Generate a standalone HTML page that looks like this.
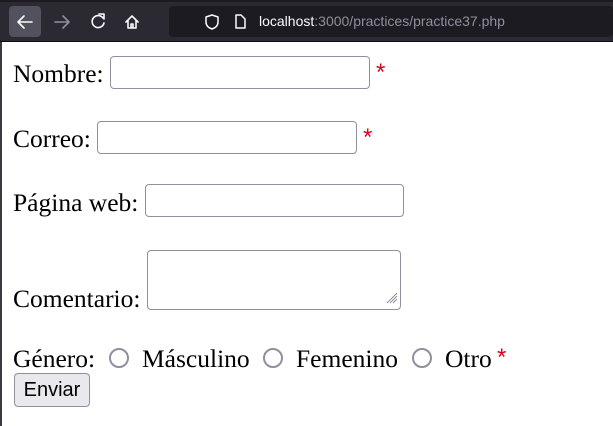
<!DOCTYPE html>
<html><head><meta charset="utf-8"><style>
*{margin:0;padding:0;box-sizing:border-box}
body{width:613px;height:426px;overflow:hidden;background:#fff;position:relative;font-family:"Liberation Serif",serif;font-size:25.5px;color:#000}
.a{position:absolute;white-space:nowrap}
.t{line-height:1}
.in{position:absolute;border:1px solid #8f8f9d;border-radius:4px;background:#fff}
.st{position:absolute;color:#e0001a;font-size:24px;font-family:"Liberation Sans",sans-serif;line-height:1}
.r{position:absolute;width:20px;height:20px;border:2.5px solid #8f8f9d;border-radius:50%}
</style></head><body>
<div class="a" style="left:0;top:0;width:613px;height:42px;background:#2b2a33"></div>
<div class="a" style="left:0;top:0;width:613px;height:2px;background:#1c1b22"></div>
<div class="a" style="left:0;top:41px;width:613px;height:1px;background:#0c0c0d"></div>
<div class="a" style="left:0;top:42px;width:2px;height:384px;background:#3a3a40"></div>
<div class="a" style="left:9px;top:6px;width:32px;height:31px;background:#52525e;border-radius:4px"></div>
<svg class="a" style="left:0;top:0" width="200" height="42">
<g fill="none" stroke="#fbfbfe" stroke-width="1.6" stroke-linecap="round" stroke-linejoin="round">
<path d="M18 22h14M24 16l-6 6 6 6"/>
<path d="M55 22h14M63 16l6 6-6 6" stroke="#8f8f9d"/>
<path d="M103 18a6 6 0 1 0 1 5"/><path d="M99 14h5v5" />
<path d="M126 22l6-6 6 6M128 20v8h8v-8M131 28v-4h2v4"/>
</g></svg>
<div class="a" style="left:169px;top:6px;width:444px;height:31px;background:#1c1b22;border-radius:4px"></div>
<svg class="a" style="left:169px;top:6px" width="80" height="31">
<g fill="none" stroke="#fbfbfe" stroke-width="1.5" stroke-linejoin="round">
<path d="M43 9l6 2v5c0 4-3 6-6 7-3-1-6-3-6-7v-5z"/>
<path d="M67 9h5l4 4v9h-9z"/>
</g></svg>
<div class="a" style="left:259px;top:13px;font-family:'Liberation Sans',sans-serif;font-size:14px;color:#fbfbfe;line-height:17px">localhost<span style="color:#8f8f9d">:3000/practices/practice37.php</span></div>

<div class="a t" style="left:13px;top:61px">Nombre:</div>
<div class="in" style="left:110px;top:56px;width:260px;height:33px"></div>
<div class="st" style="left:376px;top:61px">*</div>

<div class="a t" style="left:13px;top:126px">Correo:</div>
<div class="in" style="left:97px;top:121px;width:260px;height:33px"></div>
<div class="st" style="left:363px;top:126px">*</div>

<div class="a t" style="left:13px;top:190px">Página web:</div>
<div class="in" style="left:145px;top:184px;width:259px;height:33px"></div>

<div class="a t" style="left:13px;top:286px">Comentario:</div>
<div class="in" style="left:147px;top:250px;width:254px;height:60px"></div>
<svg class="a" style="left:385px;top:291px" width="14" height="14"><g stroke="#8f8f9d" stroke-width="1"><path d="M12 2L2 12M12 5L5 12M12 8L8 12"/></g></svg>

<div class="a t" style="left:13px;top:346px">Género:</div>
<div class="r" style="left:109px;top:348px"></div>
<div class="a t" style="left:142px;top:346px">Másculino</div>
<div class="r" style="left:263px;top:348px"></div>
<div class="a t" style="left:296px;top:346px">Femenino</div>
<div class="r" style="left:412px;top:348px"></div>
<div class="a t" style="left:445px;top:346px">Otro</div>
<div class="st" style="left:497px;top:346px">*</div>

<div class="a" style="left:14px;top:373px;width:76px;height:34px;background:#e9e9ed;border:1px solid #8f8f9d;border-radius:4px;font-family:'Liberation Sans',sans-serif;font-size:20px;line-height:32px;text-align:center">Enviar</div>
</body></html>
